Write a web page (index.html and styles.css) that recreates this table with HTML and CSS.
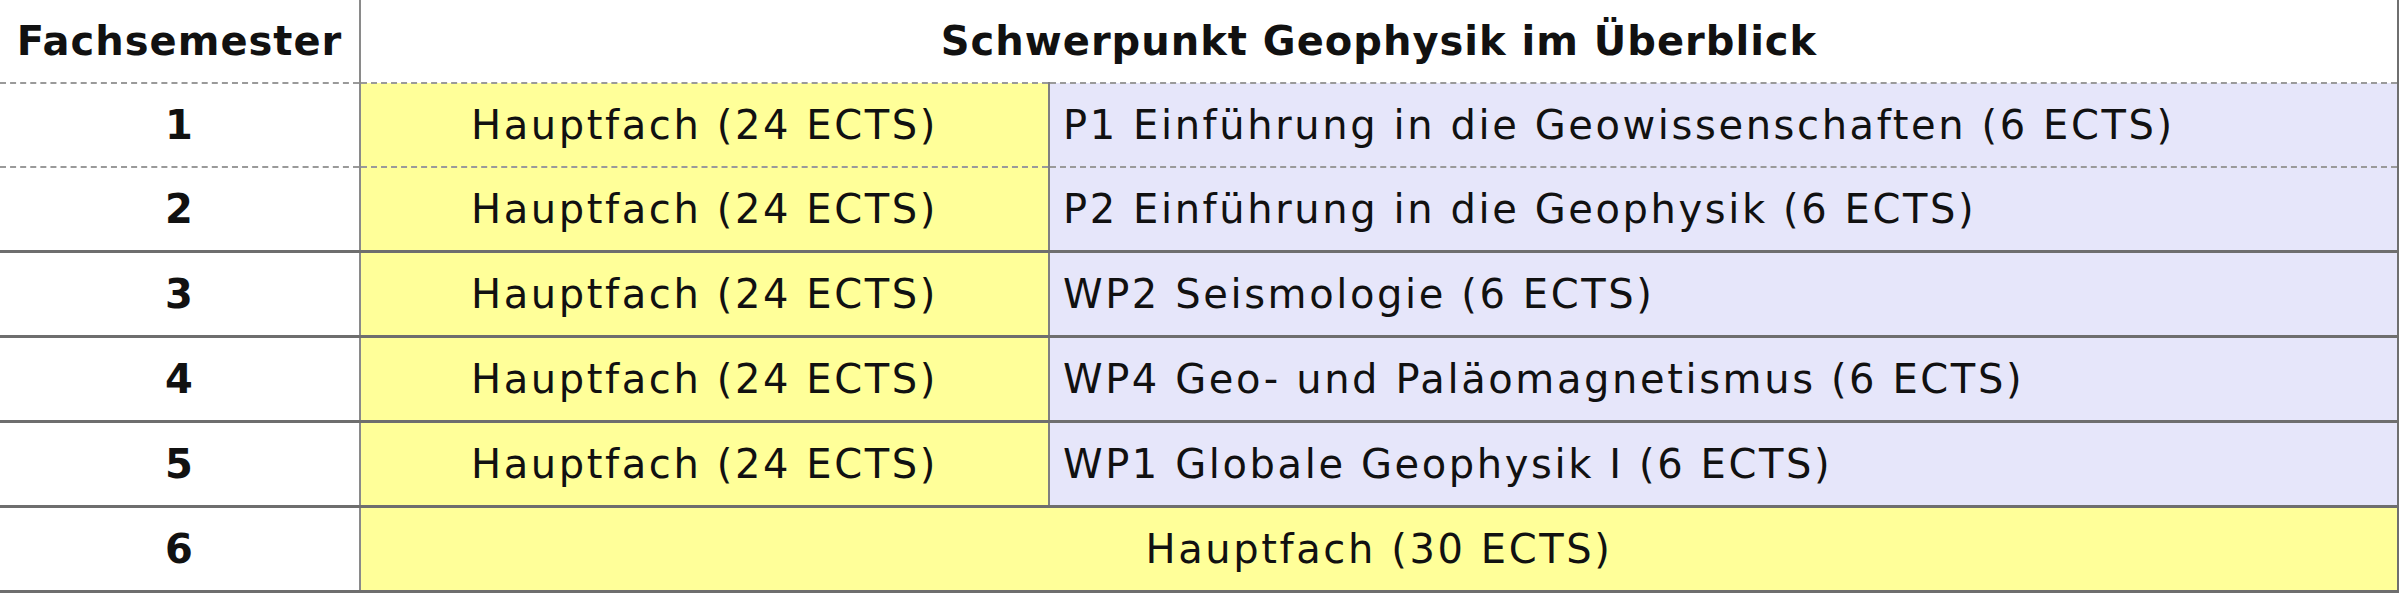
FILE: index.html
```html
<!DOCTYPE html>
<html lang="de">
<head>
<meta charset="utf-8">
<title>Schwerpunkt Geophysik</title>
<link rel="stylesheet" href="styles.css">
</head>
<body>
<table class="plan">
  <colgroup>
    <col class="c-sem">
    <col class="c-main">
    <col class="c-mod">
  </colgroup>
  <thead>
    <tr class="row-head">
      <th class="sem">Fachsemester</th>
      <th colspan="2" class="title">Schwerpunkt Geophysik im Überblick</th>
    </tr>
  </thead>
  <tbody>
    <tr class="dashed">
      <td class="sem">1</td>
      <td class="main">Hauptfach (24 ECTS)</td>
      <td class="mod">P1 Einführung in die Geowissenschaften (6 ECTS)</td>
    </tr>
    <tr>
      <td class="sem">2</td>
      <td class="main">Hauptfach (24 ECTS)</td>
      <td class="mod">P2 Einführung in die Geophysik (6 ECTS)</td>
    </tr>
    <tr>
      <td class="sem">3</td>
      <td class="main">Hauptfach (24 ECTS)</td>
      <td class="mod">WP2 Seismologie (6 ECTS)</td>
    </tr>
    <tr>
      <td class="sem">4</td>
      <td class="main">Hauptfach (24 ECTS)</td>
      <td class="mod">WP4 Geo- und Paläomagnetismus (6 ECTS)</td>
    </tr>
    <tr>
      <td class="sem">5</td>
      <td class="main">Hauptfach (24 ECTS)</td>
      <td class="mod">WP1 Globale Geophysik I (6 ECTS)</td>
    </tr>
    <tr>
      <td class="sem">6</td>
      <td colspan="2" class="main wide">Hauptfach (30 ECTS)</td>
    </tr>
  </tbody>
</table>
</body>
</html>
```

FILE: styles.css
```css
html, body {
  margin: 0;
  padding: 0;
  background: #ffffff;
}

.plan {
  width: 2399px;
  border-collapse: collapse;
  table-layout: fixed;
  font-family: "DejaVu Sans", "Liberation Sans", sans-serif;
  font-size: 40px;
  letter-spacing: 2.6px;
  color: #111111;
}

.c-sem { width: 360px; }
.c-main { width: 689px; }
.c-mod { width: auto; }

.plan th,
.plan td {
  padding: 0;
  height: 82px;
  vertical-align: middle;
  border: 0;
  border-bottom: 3px solid #6e6e6e;
}

.plan .row-head th {
  height: 82px;
  font-weight: bold;
  letter-spacing: 1px;
  text-align: center;
  border-bottom: 2px dashed #9a9a9a;
}

.plan .sem {
  text-align: center;
  font-weight: bold;
  letter-spacing: 1px;
  border-right: 2px solid #8a8a8a;
}

.plan .title {
  border-right: 2px solid #6f6f6f;
}

.plan .main {
  background: #ffff99;
  text-align: center;
}

.plan .mod {
  background: #e6e6fa;
  text-align: left;
  padding-left: 13px;
  border-left: 2px solid #7f7f7f;
  border-right: 2px solid #6f6f6f;
}

.plan .wide {
  border-right: 2px solid #6f6f6f;
}

.plan tr.dashed td {
  border-bottom: 2px dashed #9a9a9a;
}
```
